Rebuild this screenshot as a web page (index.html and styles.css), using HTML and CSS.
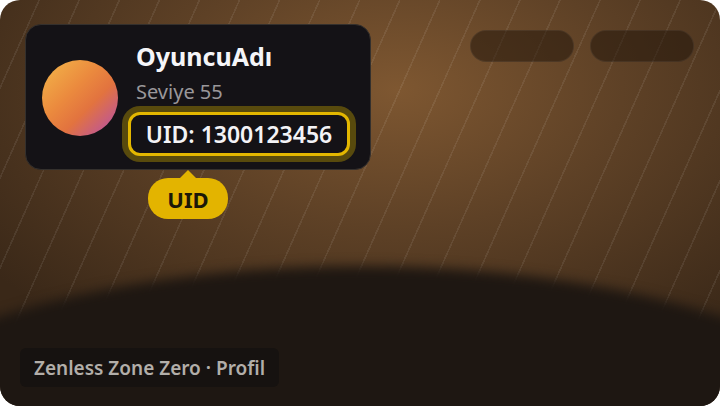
FILE: index.html
```html
<!DOCTYPE html>
<html lang="tr">
<head>
<meta charset="utf-8">
<title>Profil</title>
<link rel="stylesheet" href="styles.css">
</head>
<body>
<div class="card">
  <div class="bg-stripes"></div>
  <div class="bg-ground"></div>
  <div class="content">
    <div class="top">
      <div class="profile">
        <div class="avatar"></div>
        <div class="info">
          <div class="name">OyuncuAdı</div>
          <div class="level">Seviye 55</div>
          <div class="uid">
            <span class="uid-text">UID: 1300123456</span>
            <div class="tip">UID</div>
          </div>
        </div>
      </div>
      <div class="pills">
        <div class="pill"></div>
        <div class="pill"></div>
      </div>
    </div>
    <div class="footer">Zenless Zone Zero · Profil</div>
  </div>
</div>
</body>
</html>
```
FILE: styles.css
```css
html, body {
  margin: 0;
  padding: 0;
  background: #ffffff;
}
body {
  width: 720px;
  height: 406px;
  overflow: hidden;
  font-family: "Noto Sans", "Open Sans", sans-serif;
}
.card {
  position: relative;
  width: 720px;
  height: 406px;
  border-radius: 20px;
  overflow: hidden;
  background: radial-gradient(ellipse 70% 75% at 55% 22%, #7e5731 0%, #5e4126 45%, #3a2818 100%);
}
.bg-stripes {
  position: absolute;
  inset: 0;
  background: repeating-linear-gradient(114deg, rgba(255,255,255,0) 0px, rgba(255,255,255,0) 35px, rgba(255,255,255,0.075) 35px, rgba(255,255,255,0.075) 36.6px);
}
.bg-ground {
  position: absolute;
  left: -240px;
  top: 266px;
  width: 1200px;
  height: 500px;
  border-radius: 50%;
  background: #1e1712;
  filter: blur(6px);
}
.content {
  position: relative;
  height: 100%;
  box-sizing: border-box;
  padding: 24px 26px 19px 20px;
  display: flex;
  flex-direction: column;
}
.top {
  display: flex;
  justify-content: space-between;
  align-items: flex-start;
}
.profile {
  margin-left: 5px;
  width: 346px;
  height: 146px;
  box-sizing: border-box;
  background: #141216;
  border: 1px solid #34302d;
  border-radius: 16px;
  display: flex;
  align-items: center;
  padding-left: 16px;
  gap: 18px;
}
.avatar {
  width: 76px;
  height: 76px;
  border-radius: 50%;
  flex: none;
  background: linear-gradient(135deg, #f3b84a 0%, #eb8a3e 40%, #e2733f 62%, #b24cb4 100%);
  margin-top: 2px;
}
.info {
  display: flex;
  flex-direction: column;
  align-items: flex-start;
  margin-top: 3px;
}
.name {
  color: #f5f5f8;
  font-weight: 700;
  font-size: 25px;
  line-height: 30px;
}
.level {
  color: #9a979a;
  font-size: 20px;
  line-height: 24px;
  margin-top: 9px;
}
.uid {
  position: relative;
  margin-top: 8px;
  margin-left: -8px;
  width: 222px;
  height: 44px;
  box-sizing: border-box;
  border: 3px solid #e3b700;
  border-radius: 12px;
  background: #141216;
  box-shadow: 0 0 0 6px rgba(200, 165, 0, 0.38);
  display: flex;
  align-items: center;
  justify-content: center;
}
.uid-text {
  color: #f3f3f6;
  font-weight: 600;
  font-size: 23px;
  line-height: 28px;
}
.tip {
  position: absolute;
  left: 17px;
  top: 63px;
  width: 80px;
  height: 41px;
  border-radius: 20px;
  background: #e3b400;
  color: #1c1808;
  font-weight: 700;
  font-size: 22px;
  display: flex;
  align-items: center;
  justify-content: center;
}
.tip::before {
  content: "";
  position: absolute;
  left: 31px;
  top: -8px;
  border-left: 9px solid transparent;
  border-right: 9px solid transparent;
  border-bottom: 9px solid #e3b400;
}
.pills {
  display: flex;
  gap: 16px;
  margin-top: 6px;
}
.pill {
  width: 104px;
  height: 32px;
  box-sizing: border-box;
  border-radius: 16px;
  background: rgba(30, 18, 8, 0.5);
  border: 1px solid rgba(255, 255, 255, 0.06);
}
.footer {
  margin-top: auto;
  align-self: flex-start;
  height: 39px;
  box-sizing: border-box;
  padding: 0 14px;
  display: flex;
  align-items: center;
  background: #161210;
  border-radius: 6px;
  color: #b2aea9;
  font-weight: 600;
  font-size: 19px;
}
```
